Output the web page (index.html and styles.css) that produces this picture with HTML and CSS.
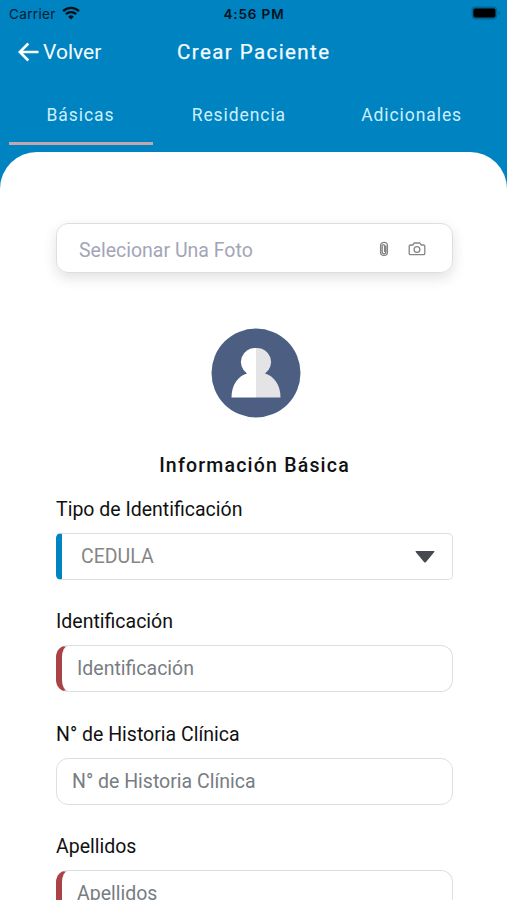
FILE: index.html
```html
<!DOCTYPE html>
<html lang="es">
<head>
<meta charset="utf-8">
<title>Crear Paciente</title>
<link rel="stylesheet" href="styles.css">
</head>
<body>
<div class="app">
  <div class="status">
    <div class="carrier"><span>Carrier</span>
      <svg width="18" height="14" viewBox="0 0 18 14"><path d="M9 13.6 6.2 10.7a4 4 0 0 1 5.6 0z"/><path class="arc" d="M3.9 8.2a7.4 7.4 0 0 1 10.2 0M1.100 5.100a11.400 11.400 0 0 1 15.800 0"/></svg>
    </div>
    <div class="clock">4:56 PM</div>
    <svg class="battery" width="30" height="14" viewBox="0 0 30 14"><rect x=".6" y=".6" width="25.6" height="12.8" rx="3.8" class="shell"/><rect x="2.4" y="2.6" width="22" height="8.8" rx="2"/><path d="M27.6 5v4c2-.8 2-3.200 0-4z" class="cap"/></svg>
  </div>
  <header class="bar">
    <div class="back"><svg width="22" height="20" viewBox="0 0 22 20"><path d="M20.500 10H2M10.300 1.500 1.800 10l8.500 8.500"/></svg><span>Volver</span></div>
    <h1>Crear Paciente</h1>
  </header>
  <nav class="tabs">
    <div class="tab active">Básicas</div>
    <div class="tab">Residencia</div>
    <div class="tab">Adicionales</div>
  </nav>
  <main class="sheet">
    <div class="photo">
      <span class="photo-text">Selecionar Una Foto</span>
      <svg class="clip" width="10" height="16" viewBox="0 0 10 16"><path d="M6.800 4.500V11a1.800 1.800 0 0 1-3.600 0V4.800a1.200 1.200 0 0 1 2.400 0V11M1.600 5.500V4.300a3.400 3 0 0 1 6.800 0v7a3.400 3.200 0 0 1-6.800 0V5"/></svg>
      <svg class="camera" width="18" height="14" viewBox="0 0 18 14"><path d="M2.500 3h2.300L6.200 1h5.600l1.400 2h2.300c.8 0 1.300.5 1.300 1.300v7.100c0 .8-.5 1.300-1.300 1.300h-13c-.8 0-1.300-.5-1.300-1.300V4.300C1.200 3.500 1.700 3 2.500 3z"/><circle cx="9" cy="7.500" r="2.900"/></svg>
    </div>
    <svg class="avatar" width="90" height="90" viewBox="0 0 90 90"><circle cx="45" cy="45" r="44.500" fill="#4c5f83"/><path d="M45 20a14 14 0 0 0-9 25.500C27 48 20.500 57 20.500 69.500H45z" fill="#fff"/><path d="M45 20a14 14 0 0 1 9 25.500C63 48 69.500 57 69.500 69.500H45z" fill="#e4e4e6"/></svg>
    <h2>Información Básica</h2>
    <div class="field"><label>Tipo de Identificación</label><div class="input select"><span>CEDULA</span><svg width="20" height="12" viewBox="0 0 20 12"><path d="M1.200 0h17.600q1.200 0 .5 1L11 11q-1 1-2 0L.7 1Q0 0 1.200 0z"/></svg></div></div>
    <div class="field"><label>Identificación</label><div class="input required"><span>Identificación</span></div></div>
    <div class="field"><label>N° de Historia Clínica</label><div class="input"><span>N° de Historia Clínica</span></div></div>
    <div class="field"><label>Apellidos</label><div class="input required"><span>Apellidos</span></div></div>
  </main>
</div>
</body>
</html>
```

FILE: styles.css
```css
* { box-sizing: border-box; }
body { margin: 0; font-family: Roboto, "Liberation Sans", sans-serif; }
.app { width: 507px; height: 900px; overflow: hidden; background: #0083c1; display: flex; flex-direction: column; }
.status { height: 28px; flex: none; display: grid; grid-template-columns: 1fr auto 1fr; align-items: center; padding: 0 6px 0 9px; color: #03202f; font-family: Inter, sans-serif; font-size: 13.500px; }
.carrier { display: flex; align-items: center; gap: 6px; letter-spacing: .35px; }
.carrier svg { margin-top: -2px; fill: #001018; }
.arc { fill: none; stroke: #001018; stroke-width: 2.400; }
.clock { font-weight: 600; color: #00121c; letter-spacing: .85px; margin-right: 2px; }
.battery { justify-self: end; margin-top: -2px; }
.shell { fill: #006595; }
.cap { fill: #006595; }
.bar { height: 50px; flex: none; display: grid; grid-template-columns: 177px 1fr; align-items: center; color: #f4fcff; padding-bottom: 2px; }
.back { display: flex; align-items: center; padding-left: 18px; gap: 3px; font-size: 21px; }
.back svg { fill: none; stroke: #fff; stroke-width: 2.600; }
h1 { margin: 0; font-size: 20.500px; font-weight: 400; letter-spacing: 1.420px; -webkit-text-stroke: .25px; }
.tabs { height: 74px; flex: none; display: grid; grid-template-columns: 144px 1fr 1fr; padding: 0 9px 7px 8.500px; color: #cdeffc; font-size: 17.500px; letter-spacing: .93px; }
.tab { display: flex; align-items: center; justify-content: center; padding-top: 6px; }
.active { border-bottom: 3px solid #c3a7ac; padding-top: 9px; }
.sheet { flex: 1; min-height: 0; overflow: hidden; background: #fff; border-radius: 37px 37px 0 0; padding: 71px 54px 0 56px; display: flex; flex-direction: column; }
.photo { height: 50px; flex: none; border: 1.500px solid #dedede; border-radius: 12px; box-shadow: 0 5px 14px rgba(0,0,0,.12); display: flex; align-items: center; padding: 5px 27px 0 22px; }
.photo-text { flex: 1; color: #a3a5b7; font-size: 19.500px; }
.photo svg { fill: none; stroke: #858585; stroke-width: 1.300; margin-top: -4px; }
.clip { margin-right: 19px; position: relative; left: 1px; }
.camera { position: relative; left: 1px; }
.avatar { flex: none; margin: 55px 0 0 154.500px; }
h2 { margin: 33px 0 0; height: 29px; line-height: 29px; text-align: center; font-size: 19.500px; font-weight: 500; letter-spacing: 1.200px; color: #111; flex: none; }
.field { height: 112.400px; flex: none; display: flex; flex-direction: column; }
.field label { display: block; height: 53px; line-height: 59px; font-size: 19.500px; color: #111; }
.input { height: 47px; border: 1.500px solid #dcdfe0; border-radius: 12px; display: flex; align-items: center; padding-left: 15px; font-size: 19.500px; color: #777d82; }
.required { border-left: 6px solid #a94345; padding-left: 15px; }
.select { border-left: 6px solid #0083c1; border-radius: 5px; justify-content: space-between; padding: 0 17px 0 19px; color: #858585; }
.select svg { fill: #454a50; }
```
